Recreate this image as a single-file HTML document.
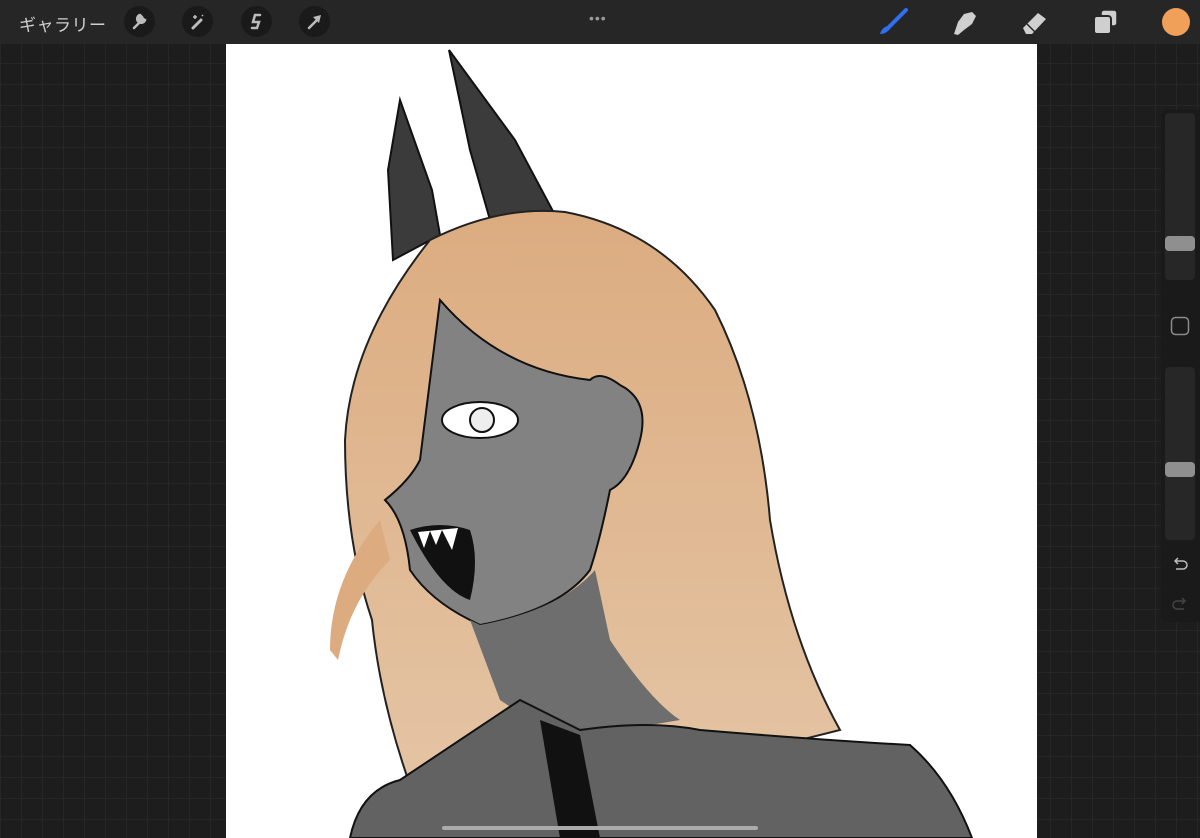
<!DOCTYPE html>
<html><head><meta charset="utf-8"><style>
*{margin:0;padding:0;box-sizing:border-box}
body{width:1200px;height:838px;overflow:hidden;position:relative;background:#1d1d1d;
background-image:linear-gradient(#262626 1px,transparent 1px),linear-gradient(90deg,#262626 1px,transparent 1px);background-size:21px 21px;font-family:"Liberation Sans","Noto Sans CJK JP",sans-serif}
.top{position:absolute;left:0;top:0;width:1200px;height:44px;background:#262626}
.gal{position:absolute;left:19px;top:11px;color:#cfcfcf;font-size:17px;letter-spacing:0.5px}
.ib{position:absolute;top:6px;width:31px;height:31px;border-radius:50%;background:#1a1a1a}
.dots{position:absolute;left:589px;top:10px;color:#9a9a9a;font-size:14px;letter-spacing:1px}
.canvas{position:absolute;left:226px;top:44px;width:811px;height:794px;background:#fff;overflow:hidden}
.side{position:absolute;left:1161px;top:110px;width:39px;height:512px;background:#1a1a1a;border-radius:7px 0 0 7px}
.sl{position:absolute;left:4px;width:30px;background:#272727;border-radius:4px}
.th{position:absolute;left:0;width:30px;height:15px;background:#8f8f8f;border-radius:4px}
.home{position:absolute;left:442px;top:826px;width:316px;height:4px;border-radius:2px;background:#aaa}
</style></head><body>
<div class="top"></div>
<div class="gal">ギャラリー</div>
<div class="ib" style="left:124px"><svg width="31" height="31"><path d="M10 22 L17 15 M16 9 a4 4 0 1 0 5 5 l-2-1-1-2 z" stroke="#bbb" stroke-width="2.5" fill="#bbb" stroke-linecap="round"/></svg></div>
<div class="ib" style="left:182px"><svg width="31" height="31"><path d="M11 22 L19 14" stroke="#bbb" stroke-width="3" stroke-linecap="round"/><path d="M13 9v4M11 11h4M20 9l1 1" stroke="#bbb" stroke-width="1.5"/></svg></div>
<div class="ib" style="left:241px"><svg width="31" height="31"><path d="M19 9h-5l-2 7h6l-2 6h-5" stroke="#bbb" stroke-width="2.5" fill="none" stroke-linecap="round"/></svg></div>
<div class="ib" style="left:299px"><svg width="31" height="31"><path d="M10 22 L19 13" stroke="#bbb" stroke-width="2.5" stroke-linecap="round"/><path d="M22 9 L14 11 L20 17 Z" fill="#bbb"/></svg></div>
<div class="dots">•••</div>
<svg style="position:absolute;left:876px;top:8px" width="36" height="28"><path d="M30 2 L12 20" stroke="#2f6ff0" stroke-width="4" stroke-linecap="round"/><path d="M4 26 Q6 19 12 18 L14 21 Q10 26 4 26Z" fill="#2f6ff0"/></svg>
<svg style="position:absolute;left:950px;top:8px" width="30" height="28"><path d="M4 26 L8 14 L14 6 L22 4 L26 8 L22 16 L14 22 L8 27Z" fill="#cfcfcf"/></svg>
<svg style="position:absolute;left:1020px;top:8px" width="30" height="28"><path d="M3 20 L18 5 L26 11 L12 26 L6 26Z" fill="#cfcfcf"/><path d="M7 16 L15 24" stroke="#262626" stroke-width="1.5"/></svg>
<svg style="position:absolute;left:1092px;top:9px" width="28" height="28"><rect x="9" y="1" width="16" height="16" rx="3" fill="#cfcfcf" stroke="#262626" stroke-width="1.5"/><rect x="2" y="7" width="17" height="18" rx="3" fill="#cfcfcf" stroke="#262626" stroke-width="2"/></svg>
<div style="position:absolute;left:1162px;top:8px;width:28px;height:28px;border-radius:50%;background:#f0a058"></div>

<div class="canvas">
<svg width="811" height="794" viewBox="226 44 811 794">
<defs><linearGradient id="h" x1="0" y1="0" x2="0" y2="1"><stop offset="0" stop-color="#dcac80"/><stop offset="1" stop-color="#e4c4a4"/></linearGradient></defs>
<polygon points="400,100 388,170 393,260 440,235 432,190" fill="#3b3b3b" stroke="#111" stroke-width="2"/>
<polygon points="449,50 470,150 490,220 555,215 515,140" fill="#3b3b3b" stroke="#111" stroke-width="2"/>
<path d="M430 240 Q500 205 565 212 Q660 230 715 310 Q760 400 770 520 Q790 640 840 730 L760 750 L560 760 L410 785 Q380 700 372 620 Q345 540 345 440 Q350 340 430 240Z" fill="url(#h)" stroke="#222" stroke-width="2"/>
<path d="M330 650 Q330 580 380 520 L390 560 Q350 600 338 660Z" fill="#dcac80"/>
<path d="M440 300 Q500 370 590 380 Q600 370 620 385 Q650 400 640 440 Q630 480 610 490 Q600 540 590 570 Q560 610 480 625 L470 620 Q430 600 410 570 Q405 520 385 500 Q410 480 420 460 Q430 380 440 300Z" fill="#828282" stroke="#111" stroke-width="2"/>
<path d="M470 620 L480 625 Q560 610 595 570 L610 640 Q650 700 680 720 L560 740 L500 700Z" fill="#6e6e6e"/>
<ellipse cx="480" cy="420" rx="38" ry="18" fill="#fff" stroke="#111" stroke-width="2"/>
<circle cx="482" cy="420" r="12" fill="#eee" stroke="#111" stroke-width="2"/>
<path d="M410 530 Q440 520 470 530 Q480 560 470 600 Q440 590 410 530Z" fill="#111"/>
<path d="M418 532 L424 548 L430 531 L436 545 L442 530 L452 550 L458 528Z" fill="#fff"/>
<path d="M350 838 Q360 790 400 780 Q460 740 520 700 L580 730 Q650 720 700 730 Q820 740 910 745 Q950 780 972 838Z" fill="#626262" stroke="#111" stroke-width="2"/>
<path d="M540 720 L560 838 L600 838 L580 735Z" fill="#111"/>
</svg>
</div>

<div class="side">
<div class="sl" style="top:3px;height:167px"><div class="th" style="top:123px"></div></div>
<svg style="position:absolute;left:9px;top:206px" width="20" height="20"><rect x="1.5" y="1.5" width="17" height="17" rx="4" fill="none" stroke="#8a8a8a" stroke-width="1.5"/></svg>
<div class="sl" style="top:257px;height:173px"><div class="th" style="top:95px"></div></div>
<svg style="position:absolute;left:9px;top:444px" width="20" height="20"><path d="M5 7h8a4 4 0 0 1 0 8H6M8 4 5 7l3 3" fill="none" stroke="#bbb" stroke-width="1.5"/></svg>
<svg style="position:absolute;left:9px;top:484px" width="20" height="20"><path d="M15 7H7a4 4 0 0 0 0 8h7M12 4l3 3-3 3" fill="none" stroke="#444" stroke-width="1.5"/></svg>
</div>
<div class="home"></div>
</body></html>
